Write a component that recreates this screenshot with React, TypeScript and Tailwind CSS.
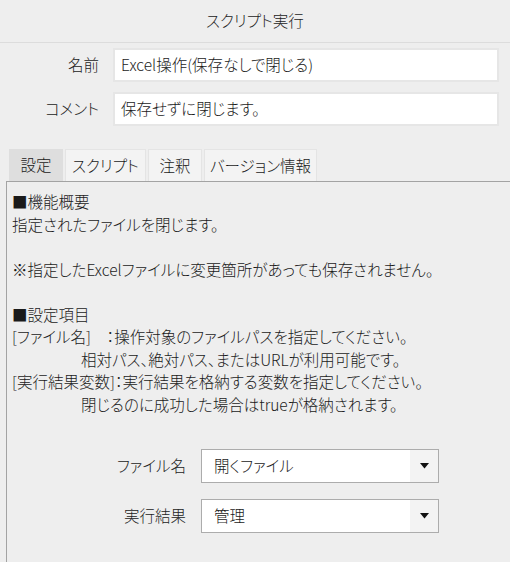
import React from "react";

interface FieldRowProps {
  label: string;
  value: string;
}

const FieldRow = ({ label, value }: FieldRowProps) => {
  return (
    <div className="flex flex-row items-center h-[34px]">
      <div className="w-[100px] text-right pr-[1px] text-[#222]">{label}</div>
      <div className="ml-[13px] w-[386px] h-[34px] bg-white border-2 border-[#e6e6e6] flex items-center pl-[6px] text-[#1a1a1a]">
        {value}
      </div>
    </div>
  );
};

interface SelectRowProps {
  label: string;
  value: string;
}

const SelectRow = ({ label, value }: SelectRowProps) => {
  return (
    <div className="flex flex-row items-center h-[34px]">
      <div className="w-[174px] text-right text-[#222]">{label}</div>
      <div className="ml-[15px] w-[238px] h-[34px] bg-white border border-[#acacac] flex flex-row">
        <div className="flex-1 flex items-center pl-[12px] text-[#1a1a1a]">{value}</div>
        <div className="w-[28px] bg-[#f3f3f3] flex items-center justify-center">
          <svg width="9" height="6" viewBox="0 0 9 6">
            <path d="M0 0 L9 0 L4.5 5.5 Z" fill="#111" />
          </svg>
        </div>
      </div>
    </div>
  );
};

const tabs = [
  { name: "設定", width: 54, active: true },
  { name: "スクリプト", width: 81, active: false },
  { name: "注釈", width: 54, active: false },
  { name: "バージョン情報", width: 113, active: false },
];

const lines = [
  { text: "■機能概要", indent: false },
  { text: "指定されたファイルを閉じます。", indent: false },
  { text: "", indent: false },
  { text: "※指定したExcelファイルに変更箇所があっても保存されません。", indent: false },
  { text: "", indent: false },
  { text: "■設定項目", indent: false },
  { text: "[ファイル名]　：操作対象のファイルパスを指定してください。", indent: false },
  { text: "相対パス、絶対パス、またはURLが利用可能です。", indent: true },
  { text: "[実行結果変数]：実行結果を格納する変数を指定してください。", indent: false },
  { text: "閉じるのに成功した場合はtrueが格納されます。", indent: true },
];

export default function App() {
  return (
    <div className="w-[510px] h-[562px] bg-[#eeeeee] overflow-hidden flex flex-col font-['Noto_Sans_CJK_JP','Noto_Sans',sans-serif] font-light [font-feature-settings:'palt'] text-[15.5px] text-[#1a1a1a]">
      <div className="h-[43px] shrink-0 border-b border-[#dcdcdc] flex items-center justify-center text-[#222]">
        スクリプト実行
      </div>
      <div className="flex flex-col gap-[10px] pt-[5px]">
        <FieldRow label="名前" value="Excel操作(保存なしで閉じる)" />
        <FieldRow label="コメント" value="保存せずに閉じます。" />
      </div>
      <div className="flex flex-row gap-[2px] ml-[9px] mt-[23px] h-[32px] shrink-0">
        {tabs.map((tab) => (
          <div
            key={tab.name}
            style={{ width: tab.width }}
            className={
              tab.active
                ? "h-[32px] bg-[#dedede] flex items-center justify-center"
                : "h-[32px] bg-[#f3f3f3] border border-b-0 border-[#e4e4e4] flex items-center justify-center"
            }
          >
            {tab.name}
          </div>
        ))}
      </div>
      <div className="ml-[6px] flex-1 border-l border-t border-[#a3a3a3] pl-[5px] pt-[8px] flex flex-col">
        <div className="leading-[22.5px] whitespace-pre">
          {lines.map((line, i) => (
            <div key={i} className={line.indent ? "h-[22.5px] pl-[69px]" : "h-[22.5px]"}>
              {line.text}
            </div>
          ))}
        </div>
        <div className="flex flex-col gap-[16px] mt-[34px]">
          <SelectRow label="ファイル名" value="開くファイル" />
          <SelectRow label="実行結果" value="管理" />
        </div>
      </div>
    </div>
  );
}
